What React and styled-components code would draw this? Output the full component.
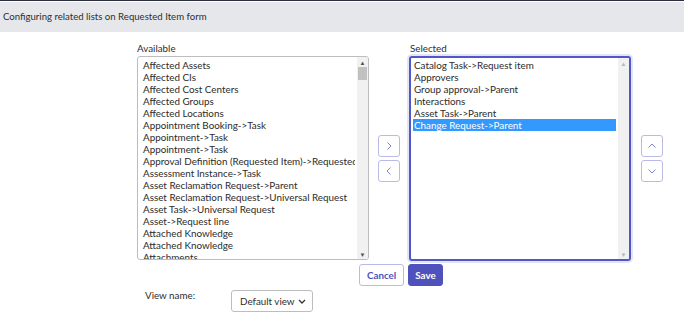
import styled, { createGlobalStyle } from "styled-components";

const GlobalStyle = createGlobalStyle`
  body {
    margin: 0;
    background: #fff;
    font-family: Lato, "Open Sans", sans-serif;
    color: #2e2e2e;
  }
`;

const available = [
  "Affected Assets",
  "Affected CIs",
  "Affected Cost Centers",
  "Affected Groups",
  "Affected Locations",
  "Appointment Booking->Task",
  "Appointment->Task",
  "Appointment->Task",
  "Approval Definition (Requested Item)->Requested Item",
  "Assessment Instance->Task",
  "Asset Reclamation Request->Parent",
  "Asset Reclamation Request->Universal Request",
  "Asset Task->Universal Request",
  "Asset->Request line",
  "Attached Knowledge",
  "Attached Knowledge",
  "Attachments",
];

const selected = [
  "Catalog Task->Request item",
  "Approvers",
  "Group approval->Parent",
  "Interactions",
  "Asset Task->Parent",
  "Change Request->Parent",
];

const Page = styled.div`
  width: 684px;
  height: 314px;
  overflow: hidden;
`;

const Header = styled.div`
  border-top: 1px solid #2b2e3d;
  height: 31px;
  background: #e6e7eb;
  display: flex;
  align-items: center;
  padding-left: 3px;
  font-size: 9.6px;
  color: #2e2e2e;
  box-shadow: inset 0 1px 0 #fff;
`;

const Body = styled.div`
  display: flex;
  align-items: flex-start;
  padding-left: 137px;
  padding-top: 9px;
`;

const Column = styled.div`
  display: flex;
  flex-direction: column;
`;

const Label = styled.div`
  font-size: 9.8px;
  line-height: 14px;
  height: 15px;
  padding-left: ${(p) => p.$indent || 0}px;
`;

const ListBox = styled.div`
  width: ${(p) => p.$width}px;
  height: ${(p) => p.$height}px;
  box-sizing: border-box;
  border: ${(p) => (p.$focused ? "2px solid #5157c6" : "1px solid #bdbdbd")};
  border-radius: 3px;
  box-shadow: ${(p) => (p.$focused ? "0 0 0 2px #e3e4f6" : "none")};
  display: flex;
  overflow: hidden;
  background: #fff;
`;

const Items = styled.div`
  flex: 1;
  padding: ${(p) => (p.$focused ? 1 : 2)}px 2px 0 ${(p) => p.$pad}px;
  overflow: hidden;
`;

const Item = styled.div`
  font-size: 9.85px;
  line-height: 12px;
  height: 12px;
  white-space: nowrap;
  overflow: hidden;
  padding-left: 1px;
  color: ${(p) => (p.$active ? "#fff" : "#2b2b2b")};
  background: ${(p) => (p.$active ? "#3399ff" : "transparent")};
`;

const ScrollBar = styled.div`
  width: 11px;
  flex: none;
  background: #f1f1f1;
  display: flex;
  flex-direction: column;
  align-items: center;
`;

const ScrollArrow = styled.div`
  width: 11px;
  height: 10px;
  display: flex;
  align-items: center;
  justify-content: center;
  font-size: 6px;
  color: ${(p) => (p.$dim ? "#b5b5b5" : "#505050")};
`;

const Thumb = styled.div`
  width: 9px;
  height: 13px;
  background: #c1c1c1;
`;

const Spacer = styled.div`
  flex: 1;
`;

const MoveButtons = styled.div`
  display: flex;
  flex-direction: column;
  gap: 3px;
  padding-top: 94px;
  margin: 0 ${(p) => p.$right}px 0 ${(p) => p.$left}px;
`;

const IconButton = styled.button`
  width: 22px;
  height: 22px;
  padding: 0;
  border: 1px solid #b9bbe6;
  border-radius: 3px;
  background: #fff;
  display: flex;
  align-items: center;
  justify-content: center;
  color: #7e82d2;
`;

const Actions = styled.div`
  display: flex;
  gap: 4px;
  padding-left: 359px;
  margin-top: 3px;
`;

const Button = styled.button`
  height: 22px;
  padding: 0 ${(p) => (p.$primary ? 6 : 7)}px;
  border-radius: 3px;
  border: 1px solid ${(p) => (p.$primary ? "#4f52bd" : "#b9bbe6")};
  background: ${(p) => (p.$primary ? "#4f52bd" : "#fff")};
  color: ${(p) => (p.$primary ? "#fff" : "#4f52bd")};
  font-family: Lato, sans-serif;
  font-weight: 700;
  font-size: 9.8px;
`;

const ViewRow = styled.div`
  display: flex;
  align-items: flex-start;
  padding-left: 145px;
  margin-top: 2px;
`;

const ViewLabel = styled.div`
  font-size: 9.8px;
  width: 86px;
  padding-top: 1px;
`;

const Select = styled.div`
  width: 82px;
  height: 22px;
  box-sizing: border-box;
  border: 1px solid #bdbdbd;
  border-radius: 3px;
  display: flex;
  align-items: center;
  justify-content: space-between;
  padding: 0 6px 0 8px;
  font-size: 9.8px;
  white-space: nowrap;
  margin-top: 2px;
`;

const Chevron = ({ dir }) => {
  const paths = {
    right: "M4.5 2.5l3.5 3.5-3.5 3.5",
    left: "M7.5 2.5L4 6l3.5 3.5",
    up: "M2.5 7.5L6 4l3.5 3.5",
    down: "M2.5 4.5L6 8l3.5-3.5",
  };
  return (
    <svg width="12" height="12" viewBox="0 0 12 12">
      <path d={paths[dir]} fill="none" stroke="currentColor" strokeWidth="1" />
    </svg>
  );
};

function List({ items, width, height, focused, activeIndex, pad, showThumb }) {
  return (
    <ListBox $width={width} $height={height} $focused={focused}>
      <Items $pad={pad} $focused={focused}>
        {items.map((t, i) => (
          <Item key={i} $active={i === activeIndex}>
            {t}
          </Item>
        ))}
      </Items>
      <ScrollBar>
        <ScrollArrow $dim={!showThumb}>▲</ScrollArrow>
        {showThumb && <Thumb />}
        <Spacer />
        <ScrollArrow $dim={!showThumb}>▼</ScrollArrow>
      </ScrollBar>
    </ListBox>
  );
}

export default function App() {
  return (
    <Page>
      <GlobalStyle />
      <Header>Configuring related lists on Requested Item form</Header>
      <Body>
        <Column>
          <Label>Available</Label>
          <List items={available} width={232} height={204} pad={4} showThumb />
        </Column>
        <MoveButtons $left={9} $right={9}>
          <IconButton>
            <Chevron dir="right" />
          </IconButton>
          <IconButton>
            <Chevron dir="left" />
          </IconButton>
        </MoveButtons>
        <Column>
          <Label $indent={1}>Selected</Label>
          <List
            items={selected}
            width={222}
            height={205}
            focused
            activeIndex={5}
            pad={2}
          />
        </Column>
        <MoveButtons $left={10} $right={0}>
          <IconButton>
            <Chevron dir="up" />
          </IconButton>
          <IconButton>
            <Chevron dir="down" />
          </IconButton>
        </MoveButtons>
      </Body>
      <Actions>
        <Button>Cancel</Button>
        <Button $primary>Save</Button>
      </Actions>
      <ViewRow>
        <ViewLabel>View name:</ViewLabel>
        <Select>
          <span>Default view</span>
          <svg width="8" height="8" viewBox="0 0 8 8">
            <path d="M1 3l3 3 3-3" fill="none" stroke="#333" strokeWidth="1.3" />
          </svg>
        </Select>
      </ViewRow>
    </Page>
  );
}
